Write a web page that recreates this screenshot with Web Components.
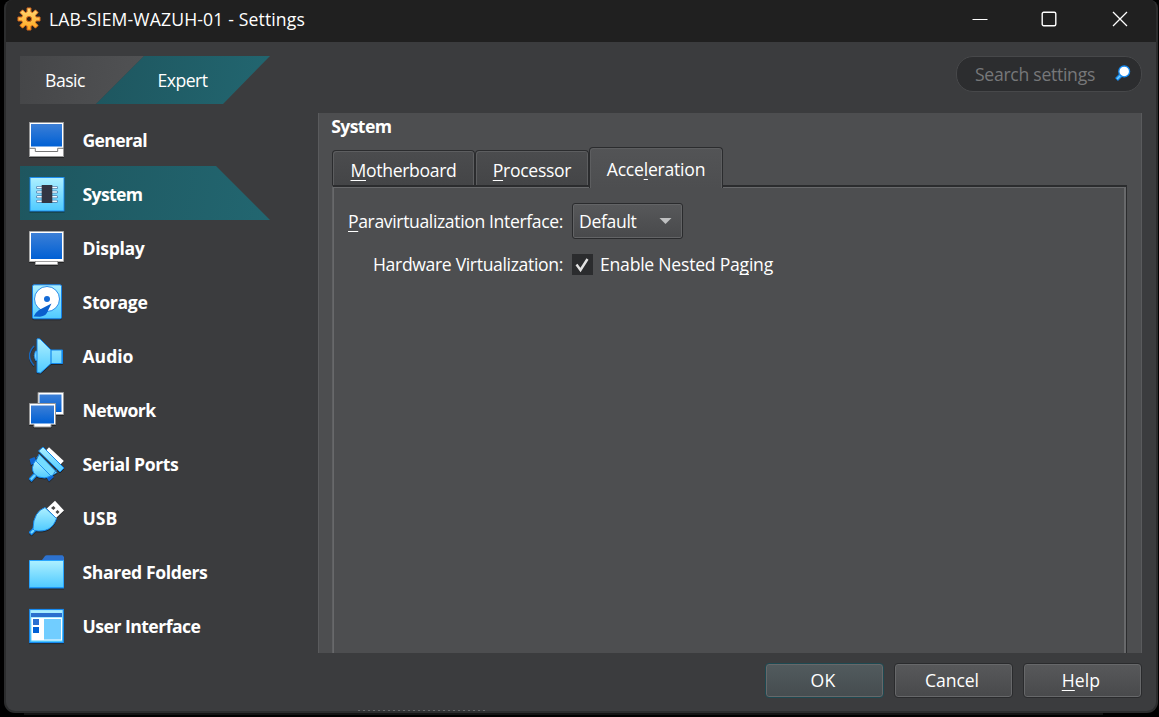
<!DOCTYPE html>
<html lang="en"><head><meta charset="utf-8"><title>LAB-SIEM-WAZUH-01 - Settings</title>
<style>
html,body{margin:0;height:100%;background:#000;overflow:hidden}
body{font:17.6px/24px "Open Sans","Noto Sans",sans-serif;color:#fff;width:1159px;height:717px}
u{text-decoration-thickness:1px;text-underline-offset:3px;text-decoration-skip-ink:none}
</style></head><body>
<settings-window></settings-window>
<script>
const define=(name,html,init)=>{
  const t=document.createElement('template');t.innerHTML=html;
  customElements.define(name,class extends HTMLElement{
    connectedCallback(){
      if(this.shadowRoot)return;
      this.attachShadow({mode:'open'}).append(t.content.cloneNode(true));
      if(init)init.call(this,this.shadowRoot);
    }
  });
};

/* Label whose tracking is adjusted so the run takes up a given width. */
define('ui-label',`<style>:host{display:inline-block;white-space:pre;flex:none}span{display:inline-block}
::slotted(u){text-decoration-thickness:1px;text-underline-offset:3px;text-decoration-skip-ink:none}</style><span><slot></slot></span>`,
function(r){
  const s=r.querySelector('span'),w=+this.getAttribute('w'),n=this.textContent.length;
  const nat=s.getBoundingClientRect().width;
  s.style.letterSpacing=((w-nat)/n).toFixed(3)+'px';
  this.style.width=w+'px';
});

const defs=`<defs>
<linearGradient id="b" x1="0" y1="0" x2="0" y2="1"><stop offset="0" stop-color="#3c7fd6"/><stop offset="1" stop-color="#0060d4"/></linearGradient>
<linearGradient id="c" x1="0" y1="0" x2="0" y2="1"><stop offset="0" stop-color="#aef0ff"/><stop offset="1" stop-color="#4fcaff"/></linearGradient></defs>`;
const icons={
general:`<rect x=".5" y=".5" width="34" height="34" fill="#fff" stroke="#999"/><rect x="2" y="2" width="31" height="22.500" fill="url(#b)"/><path d="M0 26.300H6.300V29.500H28.700V26.300H35" fill="none" stroke="#777"/>`,
system:`<rect x="1" y="1.500" width="34" height="33.500" fill="url(#c)" stroke="#1d8ef0"/><g stroke="#4f7fae" stroke-width="3" stroke-linecap="round"><path d="M8.500 11.500H27.500M8.500 16H27.500M8.500 20.800H27.500M8.500 25.300H27.500"/></g><g stroke="#f1fbff" stroke-width="1.500" stroke-linecap="round"><path d="M8.500 11.500H27.500M8.500 16H27.500M8.500 20.800H27.500M8.500 25.300H27.500"/></g><rect x="12.700" y="9" width="10.600" height="18" fill="#333542"/>`,
display:`<path d="M.5 1.500H34.500V31.500H28.500V34.500H6.500V31.500H.5Z" fill="#fff" stroke="#aaa"/><rect x="2" y="3" width="31" height="26" fill="url(#b)"/><path d="M6 31.500H29" stroke="#777" stroke-width=".7"/>`,
storage:`<rect x="3.500" y=".8" width="29" height="34" rx="1.500" fill="url(#c)" stroke="#1681e8"/><circle cx="18" cy="15" r="12.500" fill="#fff" stroke="#1681e8" stroke-width=".9"/><circle cx="18" cy="15" r="3" fill="#146bd6"/><path d="M22.500 19.500L18.800 27Q17.500 32 11 32.700L4.600 32.500Q6.500 28.500 10 26Z" fill="#0b60cc"/>`,
audio:`<path d="M5 8Q-4 18 5 27.500" fill="none" stroke="#1767bc" stroke-width="1.500"/><path d="M9 13H6.500Q4 17.500 6.500 22.500H9Z" fill="#76d5ff" stroke="#1387ec" stroke-width=".8"/><path d="M8 1Q8 .4 11 1L22 12H33.500V25.500H22L11.500 35L8 34.500Z" fill="url(#c)" stroke="#1387ec"/><path d="M22 12V25.500M33 12V25" stroke="#1387ec" stroke-width="1.200"/>`,
network:`<path d="M9 .5H34.500V22.500H9Z" fill="#fff" stroke="#999"/><rect x="10.500" y="2.500" width="22" height="17.500" fill="url(#b)"/><path d="M.5 11.500H26.500V32.500H22V35H5V32.500H.5Z" fill="#fff" stroke="#999"/><rect x="2" y="13.500" width="23" height="18" fill="url(#b)"/>`,
serial:`<path d="M.5 13L5.500 11L8 16L2 19ZM17 31L22 27L25 31L20 35.500Z" fill="#1065d1"/><path d="M20 1.200L34.800 15L31.500 18.500L17 4.500Z" fill="#fff"/><path d="M1 34.500L6 29" stroke="#1387ec" stroke-width="4.500"/><path d="M1.800 33.600L7 28" stroke="#6bd5ff" stroke-width="2.200"/><path d="M7 14L22 30Q16 33.500 9.500 31Q3 28 3.500 21.500Q4 17 7 14Z" fill="url(#c)" stroke="#1387ec"/><path d="M10 8L28 26.500L22 30L7 15Z" fill="#74dcff" stroke="#1387ec" stroke-width=".8"/><path d="M9.500 5L14 1L35 22L31 26Z" fill="url(#c)" stroke="#1387ec"/><path d="M24.500 27.500L28 23.500M7.500 12L11 8" fill="none" stroke="#1f80d4"/>`,
usb:`<path d="M26 .8L35 10.500L27 18L17.800 8.500Z" fill="#fff"/><path d="M22 8L24.500 6L26.500 8L24.500 10ZM26.500 12L28.500 10L30.500 12L28.500 14Z" fill="#444"/><path d="M1 34L6 29" stroke="#1387ec" stroke-width="4.500"/><path d="M2 33L7 28" stroke="#76dcff" stroke-width="2.200"/><path d="M16 7.500L27.500 18.500Q25 26 19.500 29Q14 32 5.500 30.500L4 29Q4 20 7.500 14.500Q10.500 9.500 16 7.500Z" fill="url(#c)" stroke="#1387ec"/>`,
folder:`<path d="M13 6L16 2Q16.500 1.300 18 1.300H33.500L35 3V8H12Z" fill="#2d72cf"/><path d="M.5 6.500H34.500V33.500H.5Z" fill="url(#c)" stroke="#27a5ff"/><path d="M0 34H35" stroke="#198cf0" stroke-width="1"/>`,
ui:`<rect x=".7" y="1.500" width="33.600" height="33" fill="url(#c)" stroke="#168af0" stroke-width="1.200"/><rect x="2" y="5" width="31" height="4" fill="#2a6fce"/><rect x="2.500" y="9.800" width="30.500" height="22.700" fill="#fff"/><rect x="4" y="11" width="6" height="6" fill="#2a70d1"/><rect x="4" y="19" width="6" height="6" fill="#0060d4"/><rect x="15" y="11" width="17" height="20.500" fill="#71cdff"/>`
};
define('vm-icon',`<style>:host{display:block;width:36px;height:36px;flex:none}svg{display:block;filter:drop-shadow(.5px 1px .5px #0006)}</style><svg width="36" height="36" viewBox="0 0 36 36"></svg>`,
function(r){r.querySelector('svg').innerHTML=defs+icons[this.getAttribute('name')]});

define('title-bar',`<style>
:host{display:flex;height:42px;background:#202020;align-items:center;padding:0 28px 4px 11px;box-sizing:border-box;color:#fff}
.gear{margin:0 8px 0 0;flex:none}.ctl{margin-left:auto;display:flex;gap:55px;align-items:center}
.ctl svg:first-child{margin-right:-2px}
svg{display:block}</style>
<svg class="gear" width="24" height="24" viewBox="-12 -12 24 24"><defs><linearGradient id="g" x1="0" y1="0" x2="0" y2="1"><stop offset="0" stop-color="#ffd977"/><stop offset="1" stop-color="#ffa61e"/></linearGradient></defs>
<path id="cog" fill="url(#g)" stroke="#d9691c" stroke-width="1" stroke-linejoin="round"/><circle r="2.600" fill="#33200f" stroke="#d9691c"/></svg>
<ui-label w="256">LAB-SIEM-WAZUH-01 - Settings</ui-label>
<div class="ctl"><svg width="16" height="16"><path d="M.5 8.500H15.500" stroke="#fff"/></svg>
<svg width="16" height="16"><rect x="1.200" y="1.200" width="13.600" height="13.600" rx="1.500" fill="none" stroke="#fff" stroke-width="1.400"/></svg>
<svg width="16" height="16"><path d="M1 1L15 15M15 1L1 15" stroke="#fff" stroke-width="1.300"/></svg></div>`,
function(r){
  let d='';
  for(let i=0;i<8;i++){
    for(const [a,q] of [[-15,7.4],[-10,11.2],[10,11.2],[15,7.4]]){
      const t=(i*45+a)*Math.PI/180;
      d+=(d?'L':'M')+(q*Math.sin(t)).toFixed(2)+' '+(-q*Math.cos(t)).toFixed(2);
    }
  }
  r.querySelector('#cog').setAttribute('d',d+'Z');
});

define('mode-switch',`<style>
:host{display:flex;width:250px;height:48px;color:#fff}
div{display:flex;align-items:center;box-sizing:border-box}
.basic{width:124px;padding-left:25px;background:linear-gradient(100deg,#454648,#515254);clip-path:polygon(0 0,100% 0,76px 100%,0 100%)}
.expert{width:174px;margin-left:-48px;padding-left:61.5px;background:linear-gradient(100deg,#1e565f,#226670);clip-path:polygon(48px 0,100% 0,127px 100%,0 100%)}
</style><div class="basic"><ui-label w="40">Basic</ui-label></div><div class="expert"><ui-label w="50">Expert</ui-label></div>`);

define('search-box',`<style>
:host{display:flex;align-items:center;justify-content:space-between;box-sizing:border-box;width:186px;height:36px;border:1px solid #47484a;border-radius:17px;background:#2c2d2f;color:#77787a;padding:0 9px 0 18px}
svg{display:block;margin-top:-2px}</style><ui-label w="120">Search settings</ui-label>
<svg width="18" height="18" viewBox="0 0 18 18"><path d="M2.500 15.500L7 11" stroke="#168af0" stroke-width="4"/><path d="M3 15L7 11" stroke="#71cdff" stroke-width="1.600"/><circle cx="10.200" cy="7.400" r="5.400" fill="#fff" stroke="#168af0" stroke-width="1.300"/></svg>`);

define('nav-item',`<style>
:host{display:flex;height:54px;width:250px;box-sizing:border-box;padding:10px 9px 8px;gap:17.500px;align-items:center;font-weight:700;color:#fff}
:host([selected]){background:linear-gradient(100deg,#1e565f,#226670);clip-path:polygon(0 0,196px 0,100% 100%,0 100%)}
</style><vm-icon></vm-icon><ui-label></ui-label>`,
function(r){
  r.querySelector('vm-icon').replaceWith(Object.assign(document.createElement('template'),{innerHTML:`<vm-icon name="${this.getAttribute('icon')}"></vm-icon>`}).content);
  r.querySelector('ui-label').replaceWith(Object.assign(document.createElement('template'),{innerHTML:`<ui-label w="${this.getAttribute('w')}">${this.textContent}</ui-label>`}).content);
});

define('push-button',`<style>
:host{display:flex;width:119px;height:35px;box-sizing:border-box;border:1px solid #2a2b2d;border-radius:4px;box-shadow:inset 0 0 0 1px #67686a;background:linear-gradient(#58595b,#48494b);justify-content:center;align-items:center;color:#fff;padding:0 2px 0 0}
:host([primary]){border-color:#1d4a52;background:linear-gradient(#525b5e,#454c4f)}
</style><slot></slot>`);

define('tab-page',`<style>
:host{display:flex;flex-direction:column;flex:1}
.tabs{display:flex;align-items:flex-end;height:41px;position:relative;z-index:1;margin-bottom:-3px}
.tab{box-sizing:border-box;height:35px;border:1px solid #2b2c2e;border-bottom:0;border-radius:4px 4px 0 0;background:linear-gradient(#4b4c4e,#444547);box-shadow:inset 1px 1px #5d5e60,inset -1px 0 #5d5e60;display:flex;justify-content:center;align-items:center;padding-top:4px;margin:0 0 3px;color:#fff}
.tab.on{height:41px;margin:0;background:linear-gradient(#535456,#4d4e50);padding-top:1px;padding-bottom:0}
.pane{flex:1;box-sizing:border-box;border-top:2px solid #2b2c2e;border-right:1px solid #2b2c2e;box-shadow:inset 1px 1px #68696b,inset -2px 0 #68696b;border-left:1px solid #606163;padding:16px 0 0 15px}
.grid{display:grid;grid-template-columns:215px 111px;column-gap:9px;row-gap:8px;align-items:center;grid-template-rows:36px 34px}
.grid>:nth-child(odd){justify-self:end}
.combo{display:flex;box-sizing:border-box;width:111px;height:36px;border:1px solid #2a2b2d;border-radius:3px;box-shadow:inset 0 0 0 1px #636466;background:linear-gradient(#57585a,#48494b);align-items:center;justify-content:space-between;padding:0 10px 0 6px}
.check{display:flex;align-items:center;gap:7px;white-space:nowrap}
.box{display:block;width:21px;height:21px;background:#2b2c2e;flex:none}
svg{display:block}
</style>
<div class="tabs"><div class="tab" style="width:143px"><ui-label w="106">​<u>M</u>otherboard</ui-label></div>
<div class="tab" style="width:114px"><ui-label w="78.5"><u>P</u>rocessor</ui-label></div>
<div class="tab on" style="width:134px"><ui-label w="98.5">Acce<u>l</u>eration</ui-label></div></div>
<div class="pane"><div class="grid">
<ui-label w="215"><u>P</u>aravirtualization Interface:</ui-label>
<div class="combo"><ui-label w="57.5">Default</ui-label><svg width="13" height="8"><path d="M.5 1H12.500L6.500 7Z" fill="#bfc0c1"/></svg></div>
<ui-label w="190">Hardware Virtualization:</ui-label>
<div class="check"><span class="box"><svg width="21" height="21"><path d="M4.500 10.500L8.500 16L15.500 5" fill="none" stroke="#e2e2e2" stroke-width="2.400"/></svg></span><ui-label w="173">Enable Nested Pa<u>g</u>ing</ui-label></div>
</div></div>`.replace('\u200b',''));

define('settings-panel',`<style>
:host{display:flex;flex-direction:column;box-sizing:border-box;width:824px;height:540px;margin-top:1px;background:#4d4e50;border:solid #5a5b5d;border-width:0 1px;padding:0 14px 0 13px}
.h{font-weight:700;height:34px;color:#fff;line-height:27px;margin-left:-.7px}</style>
<div class="h"><ui-label w="60">System</ui-label></div><tab-page></tab-page>`);

define('settings-window',`<style>
:host{display:block;width:1159px;height:717px;overflow:hidden;background:#000}
.win{box-sizing:border-box;margin-left:4px;width:1154px;height:713px;border:solid #2c2d2e;border-width:0 2px 2px;border-radius:8px 8px 11px 11px;background:#3b3c3e;overflow:hidden;display:flex;flex-direction:column}
.top{display:flex;justify-content:space-between;padding:14px 14px 0;height:70px;box-sizing:border-box}
.mid{display:flex;justify-content:space-between;padding:0 14px;height:541px}
.foot{display:flex;justify-content:flex-end;gap:10px;padding:9.5px 14.5px 0}
.below{height:2px;background:#151515;margin:0 56px 0 24px}
.peek{height:1px;width:127px;margin:12.5px 0 0 352px;background:repeating-linear-gradient(90deg,#66686a 0 2px,#3b3c3e 2px 5px)}
</style>
<div class="win"><title-bar></title-bar>
<div class="top"><mode-switch></mode-switch><search-box></search-box></div>
<div class="mid"><nav>
<nav-item icon="general" w="64.500">General</nav-item>
<nav-item icon="system" w="60" selected>System</nav-item>
<nav-item icon="display" w="62">Display</nav-item>
<nav-item icon="storage" w="65">Storage</nav-item>
<nav-item icon="audio" w="51">Audio</nav-item>
<nav-item icon="network" w="73">Network</nav-item>
<nav-item icon="serial" w="96">Serial Ports</nav-item>
<nav-item icon="usb" w="35">USB</nav-item>
<nav-item icon="folder" w="125">Shared Folders</nav-item>
<nav-item icon="ui" w="118">User Interface</nav-item>
</nav><settings-panel></settings-panel></div>
<div class="foot"><push-button primary><ui-label w="25">OK</ui-label></push-button><push-button><ui-label w="54">Cancel</ui-label></push-button><push-button><ui-label w="38.500"><u>H</u>elp</ui-label></push-button></div>
<div class="peek"></div>
</div><div class="below"></div>`);
</script></body></html>
